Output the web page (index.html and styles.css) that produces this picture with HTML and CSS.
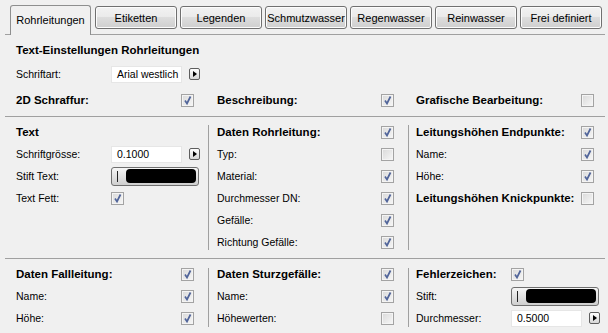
FILE: index.html
```html
<!DOCTYPE HTML>
<html>
<head>
<meta charset="utf-8">
<link rel="stylesheet" href="styles.css">
</head>
<body>
<div class="tabs">
	<div class="tab active">Rohrleitungen</div>
	<div class="tab">Etiketten</div>
	<div class="tab">Legenden</div>
	<div class="tab">Schmutzwasser</div>
	<div class="tab">Regenwasser</div>
	<div class="tab">Reinwasser</div>
	<div class="tab">Frei definiert</div>
</div>

<div class="sec top">
	<div class="row title"><b>Text-Einstellungen Rohrleitungen</b></div>
	<div class="row r2"><span class="lbl">Schriftart:</span><span class="inp">Arial westlich</span><span class="arr"></span></div>
	<div class="cols flat">
		<div class="col c1"><div class="row sp"><b>2D Schraffur:</b><span class="cb on"><svg viewBox="0 0 11 11"><path d="M3 5.5 L5 8.5 L8.5 1.5"/></svg></span></div></div>
		<div class="col c2"><div class="row sp"><b>Beschreibung:</b><span class="cb on"><svg viewBox="0 0 11 11"><path d="M3 5.5 L5 8.5 L8.5 1.5"/></svg></span></div></div>
		<div class="col c3"><div class="row sp"><b>Grafische Bearbeitung:</b><span class="cb"></span></div></div>
	</div>
</div>

<div class="sec mid">
	<div class="cols">
		<div class="col c1"><div class="rows">
			<div class="row"><b>Text</b></div>
			<div class="row"><span class="lbl">Schriftgrösse:</span><span class="inp">0.1000</span><span class="arr"></span></div>
			<div class="row"><span class="lbl">Stift Text:</span><span class="pen"><i></i><em></em></span></div>
			<div class="row"><span class="lbl">Text Fett:</span><span class="cb on"><svg viewBox="0 0 11 11"><path d="M3 5.5 L5 8.5 L8.5 1.5"/></svg></span></div>
		</div></div>
		<div class="col c2"><div class="rows">
			<div class="row sp"><b>Daten Rohrleitung:</b><span class="cb on"><svg viewBox="0 0 11 11"><path d="M3 5.5 L5 8.5 L8.5 1.5"/></svg></span></div>
			<div class="row sp"><span>Typ:</span><span class="cb"></span></div>
			<div class="row sp"><span>Material:</span><span class="cb on"><svg viewBox="0 0 11 11"><path d="M3 5.5 L5 8.5 L8.5 1.5"/></svg></span></div>
			<div class="row sp"><span>Durchmesser DN:</span><span class="cb on"><svg viewBox="0 0 11 11"><path d="M3 5.5 L5 8.5 L8.5 1.5"/></svg></span></div>
			<div class="row sp"><span>Gefälle:</span><span class="cb on"><svg viewBox="0 0 11 11"><path d="M3 5.5 L5 8.5 L8.5 1.5"/></svg></span></div>
			<div class="row sp"><span>Richtung Gefälle:</span><span class="cb on"><svg viewBox="0 0 11 11"><path d="M3 5.5 L5 8.5 L8.5 1.5"/></svg></span></div>
		</div></div>
		<div class="col c3"><div class="rows">
			<div class="row sp"><b>Leitungshöhen Endpunkte:</b><span class="cb on"><svg viewBox="0 0 11 11"><path d="M3 5.5 L5 8.5 L8.5 1.5"/></svg></span></div>
			<div class="row sp"><span>Name:</span><span class="cb on"><svg viewBox="0 0 11 11"><path d="M3 5.5 L5 8.5 L8.5 1.5"/></svg></span></div>
			<div class="row sp"><span>Höhe:</span><span class="cb on"><svg viewBox="0 0 11 11"><path d="M3 5.5 L5 8.5 L8.5 1.5"/></svg></span></div>
			<div class="row sp"><b>Leitungshöhen Knickpunkte:</b><span class="cb"></span></div>
		</div></div>
	</div>
</div>

<div class="sec bot">
	<div class="cols">
		<div class="col c1"><div class="rows">
			<div class="row sp"><b>Daten Fallleitung:</b><span class="cb on"><svg viewBox="0 0 11 11"><path d="M3 5.5 L5 8.5 L8.5 1.5"/></svg></span></div>
			<div class="row sp"><span>Name:</span><span class="cb on"><svg viewBox="0 0 11 11"><path d="M3 5.5 L5 8.5 L8.5 1.5"/></svg></span></div>
			<div class="row sp"><span>Höhe:</span><span class="cb on"><svg viewBox="0 0 11 11"><path d="M3 5.5 L5 8.5 L8.5 1.5"/></svg></span></div>
		</div></div>
		<div class="col c2"><div class="rows">
			<div class="row sp"><b>Daten Sturzgefälle:</b><span class="cb on"><svg viewBox="0 0 11 11"><path d="M3 5.5 L5 8.5 L8.5 1.5"/></svg></span></div>
			<div class="row sp"><span>Name:</span><span class="cb on"><svg viewBox="0 0 11 11"><path d="M3 5.5 L5 8.5 L8.5 1.5"/></svg></span></div>
			<div class="row sp"><span>Höhewerten:</span><span class="cb"></span></div>
		</div></div>
		<div class="col c3"><div class="rows">
			<div class="row"><b class="lbl">Fehlerzeichen:</b><span class="cb on"><svg viewBox="0 0 11 11"><path d="M3 5.5 L5 8.5 L8.5 1.5"/></svg></span></div>
			<div class="row"><span class="lbl">Stift:</span><span class="pen"><i></i><em></em></span></div>
			<div class="row"><span class="lbl">Durchmesser:</span><span class="inp">0.5000</span><span class="arr"></span></div>
		</div></div>
	</div>
</div>
</body>
</html>
```

FILE: styles.css
```css
*{
box-sizing: border-box;
}
html, body{
margin: 0;
height: 100%;
}
body{
background: #f0f0f0;
font-family: "Liberation Sans", Arial, sans-serif;
font-size: 10.5px;
color: #000;
overflow: hidden;
}
b{
font-size: 11.5px;
font-weight: bold;
}

/* tabs */
.tabs{
display: flex;
align-items: flex-start;
gap: 3px;
height: 35px;
margin: 0 3px 0 5px;
padding-left: 5px;
border-bottom: 1px solid #a0a0a0;
}
.tab{
width: 82px;
height: 23px;
margin-top: 6px;
display: flex;
align-items: center;
justify-content: center;
font-size: 11px;
border: 1px solid #707070;
border-radius: 3px;
background: linear-gradient(#f2f2f2, #ebebeb 45%, #dddddd 50%, #cfcfcf);
box-shadow: inset 0 0 0 1px #fcfcfc;
}
.tab.active{
width: 81px;
height: 30px;
margin-top: 5px;
margin-right: 1px;
border-color: #8e8f8f;
border-bottom: none;
border-radius: 3px 3px 0 0;
background: #f0f0f0;
box-shadow: none;
padding-bottom: 2px;
}

/* sections */
.sec{
margin: 0 3px 0 5px;
}
.top{
padding: 4px 0 5px;
border-bottom: 1px solid #a0a0a0;
}
.mid{
padding: 8px 0 8px;
border-bottom: 1px solid #a0a0a0;
}
.bot{
padding: 9px 0 0;
}
.row{
height: 22px;
display: flex;
align-items: center;
white-space: nowrap;
}
.top .row{
padding-left: 11px;
}
.top .r2{
margin-top: 2px;
}
.top .cols{
margin-top: 4px;
}
.top .cols .row{
padding-left: 0;
}
.row.sp{
justify-content: space-between;
}
.lbl{
width: 95px;
flex: none;
}

.cols{
display: grid;
grid-template-columns: 203px 200px 197px;
}
.col{
padding-right: 14px;
}
.c1{
padding-left: 11px;
}
.c2{
padding-left: 8px;
border-left: 1px solid #a0a0a0;
}
.c3{
padding-left: 7px;
padding-right: 11px;
border-left: 1px solid #a0a0a0;
}
.cols.flat .col{
border-left-color: transparent;
}
.mid .rows{
margin: -4px 0 -3px;
}
.bot .rows{
margin: -5px 0 -2px;
}

/* controls */
.cb{
width: 13px;
height: 13px;
flex: none;
border: 1px solid #a3a3a3;
background: linear-gradient(135deg, #d9d9d9, #f7f7f7);
box-shadow: inset 0 0 0 1px #f4f4f4;
}
.cb svg{
display: block;
width: 11px;
height: 11px;
fill: none;
stroke: #51659a;
stroke-width: 1.7;
}
.inp{
width: 71px;
height: 17px;
flex: none;
background: #fff;
border: 1px solid #e6e6e6;
padding-left: 5px;
display: flex;
align-items: center;
}
.arr{
width: 11px;
height: 12px;
flex: none;
margin-left: 7px;
border: 1px solid #5e5e5e;
border-radius: 2px;
background: linear-gradient(#ffffff, #d6d6d6);
position: relative;
}
.arr::after{
content: "";
position: absolute;
left: 3px;
top: 2px;
border-left: 4px solid #000;
border-top: 3px solid transparent;
border-bottom: 3px solid transparent;
}
.pen{
width: 88px;
height: 19px;
flex: none;
border: 1px solid #6f6f6f;
border-radius: 3px;
background: linear-gradient(#f6f6f6, #e2e2e2 50%, #cfcfcf);
display: flex;
align-items: center;
padding: 0 2px 0 5px;
}
.pen i{
width: 1px;
height: 11px;
background: #222;
margin-right: 8px;
}
.pen em{
flex: 1;
height: 14px;
background: #000;
border-radius: 4px;
}
```
